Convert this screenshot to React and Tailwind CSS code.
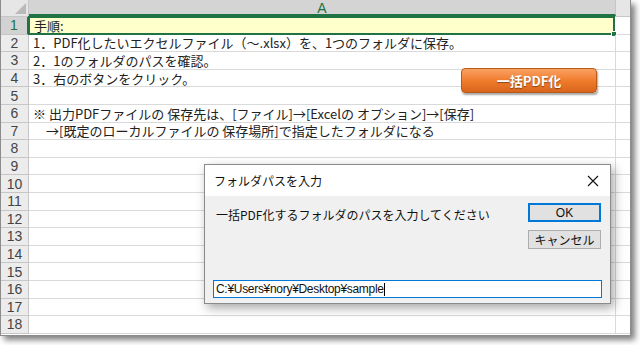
const ROWS = [
  '手順:',
  '1．PDF化したいエクセルファイル（～.xlsx）を、1つのフォルダに保存。',
  '2．1のフォルダのパスを確認。',
  '3．右のボタンをクリック。',
  '',
  '※ 出力PDFファイルの 保存先は、[ファイル]→[Excelの オプション]→[保存]',
  '　→[既定のローカルファイルの 保存場所]で指定したフォルダになる',
  '', '', '', '', '', '', '', '', '', '', '',
];

const jp = { fontFamily: '"Noto Sans CJK JP", sans-serif' };

export default function App() {
  return (
    <div className="relative w-[640px] h-[345px] overflow-hidden bg-white" style={jp}>
      {/* Sheet with its drop shadow */}
      <div className="relative w-[631px] h-[336px] border-r border-b border-l border-[#8c8c8c] bg-white shadow-[4px_4px_6px_rgba(0,0,0,0.5)] flex flex-col overflow-hidden">
        {/* Column header */}
        <div className="flex h-[17px] shrink-0 border-b border-[#c6c6c6]">
          <div className="relative w-[28px] shrink-0 bg-[#e6e6e6] border-r border-[#c6c6c6] overflow-hidden">
            <div className="absolute right-[2px] bottom-[2px] w-0 h-0 border-l-[11px] border-l-transparent border-b-[11px] border-b-[#b9b9b9]" />
          </div>
          <div className="w-[587px] shrink-0 bg-[#d4d4d4] border-r border-[#c6c6c6] border-b-2 border-b-[#217346] flex justify-center overflow-hidden">
            <span className="text-[14px] leading-none text-[#217346] mt-[1px]" style={{ fontFamily: '"Liberation Sans", sans-serif' }}>A</span>
          </div>
          <div className="flex-1 bg-[#e6e6e6]" />
        </div>

        {/* Rows */}
        {ROWS.map((text, i) => {
          const active = i === 0;
          return (
            <div key={i} className="flex h-[17.6px] shrink-0">
              <div
                className={`w-[28px] shrink-0 flex items-center justify-center border-b border-[#c6c6c6] text-[14px] leading-none ${
                  active ? 'bg-[#d2d2d2] text-[#217346] border-r-2 border-r-[#217346]' : 'bg-[#ececec] text-[#444] border-r border-r-[#c6c6c6]'
                }`}
                style={{ fontFamily: '"Liberation Sans", sans-serif' }}
              >
                {i + 1}
              </div>
              <div
                className={`relative w-[587px] shrink-0 flex items-center pl-[4px] text-[13px] leading-none text-[#222] whitespace-nowrap ${
                  active ? 'bg-[#ffffcc] border-2 border-[#217346] -ml-[1px] -mt-[1px] h-[18.6px]' : 'border-b border-r border-[#d9d9d9]'
                }`}
              >
                {text}
                {active && (
                  <div className="absolute -right-[4px] -bottom-[4px] w-[6px] h-[6px] bg-[#217346] border border-white" />
                )}
              </div>
              <div className="flex-1 border-b border-[#d9d9d9]" />
            </div>
          );
        })}
      </div>

      {/* Floating shape button */}
      <div className="absolute left-[461px] top-[68px] w-[136px] h-[25px] rounded-[4px] border border-[#b85a1a] bg-gradient-to-b from-[#f9a160] via-[#f07c2c] to-[#d8651c] shadow-[1px_2px_2px_rgba(0,0,0,0.35)] flex items-center justify-center">
        <span className="text-white font-bold text-[13px] leading-none [text-shadow:0_1px_1px_rgba(0,0,0,0.4)]">一括PDF化</span>
      </div>

      {/* Input dialog */}
      <div className="absolute left-[204px] top-[164px] w-[407px] h-[140px] border border-[#8a8a8a] bg-[#f0f0f0] shadow-[3px_4px_10px_rgba(0,0,0,0.35)] flex flex-col text-[12px] text-[#111]">
        <div className="h-[31px] bg-white flex items-center justify-between pl-[9px] pr-[10px]">
          <span>フォルダパスを入力</span>
          <svg width="12" height="12" viewBox="0 0 12 12" className="mr-[1px]">
            <path d="M1 1 L11 11 M11 1 L1 11" stroke="#111" strokeWidth="1.1" />
          </svg>
        </div>
        <div className="flex justify-between pl-[11px] pr-[9px] pt-[7px]">
          <span className="mt-[3px]">一括PDF化するフォルダのパスを入力してください</span>
          <div className="flex flex-col gap-[8px]">
            <div className="w-[73px] h-[19px] border-2 border-[#0078d7] bg-[#e1e1e1] flex items-center justify-center" style={{ fontFamily: '"Liberation Sans", sans-serif' }}>OK</div>
            <div className="w-[73px] h-[19px] border border-[#adadad] bg-[#e1e1e1] flex items-center justify-center">キャンセル</div>
          </div>
        </div>
        <div className="mt-auto mb-[5px] mx-[8px] h-[18px] border border-[#0078d7] bg-white flex items-center pl-[2px]" style={{ fontFamily: '"Liberation Sans", "Noto Sans CJK JP", sans-serif' }}>
          <span className="text-[12px] leading-none tracking-[-0.3px]">C:¥Users¥nory¥Desktop¥sample</span>
          <span className="w-px h-[13px] bg-black" />
        </div>
      </div>
    </div>
  );
}
